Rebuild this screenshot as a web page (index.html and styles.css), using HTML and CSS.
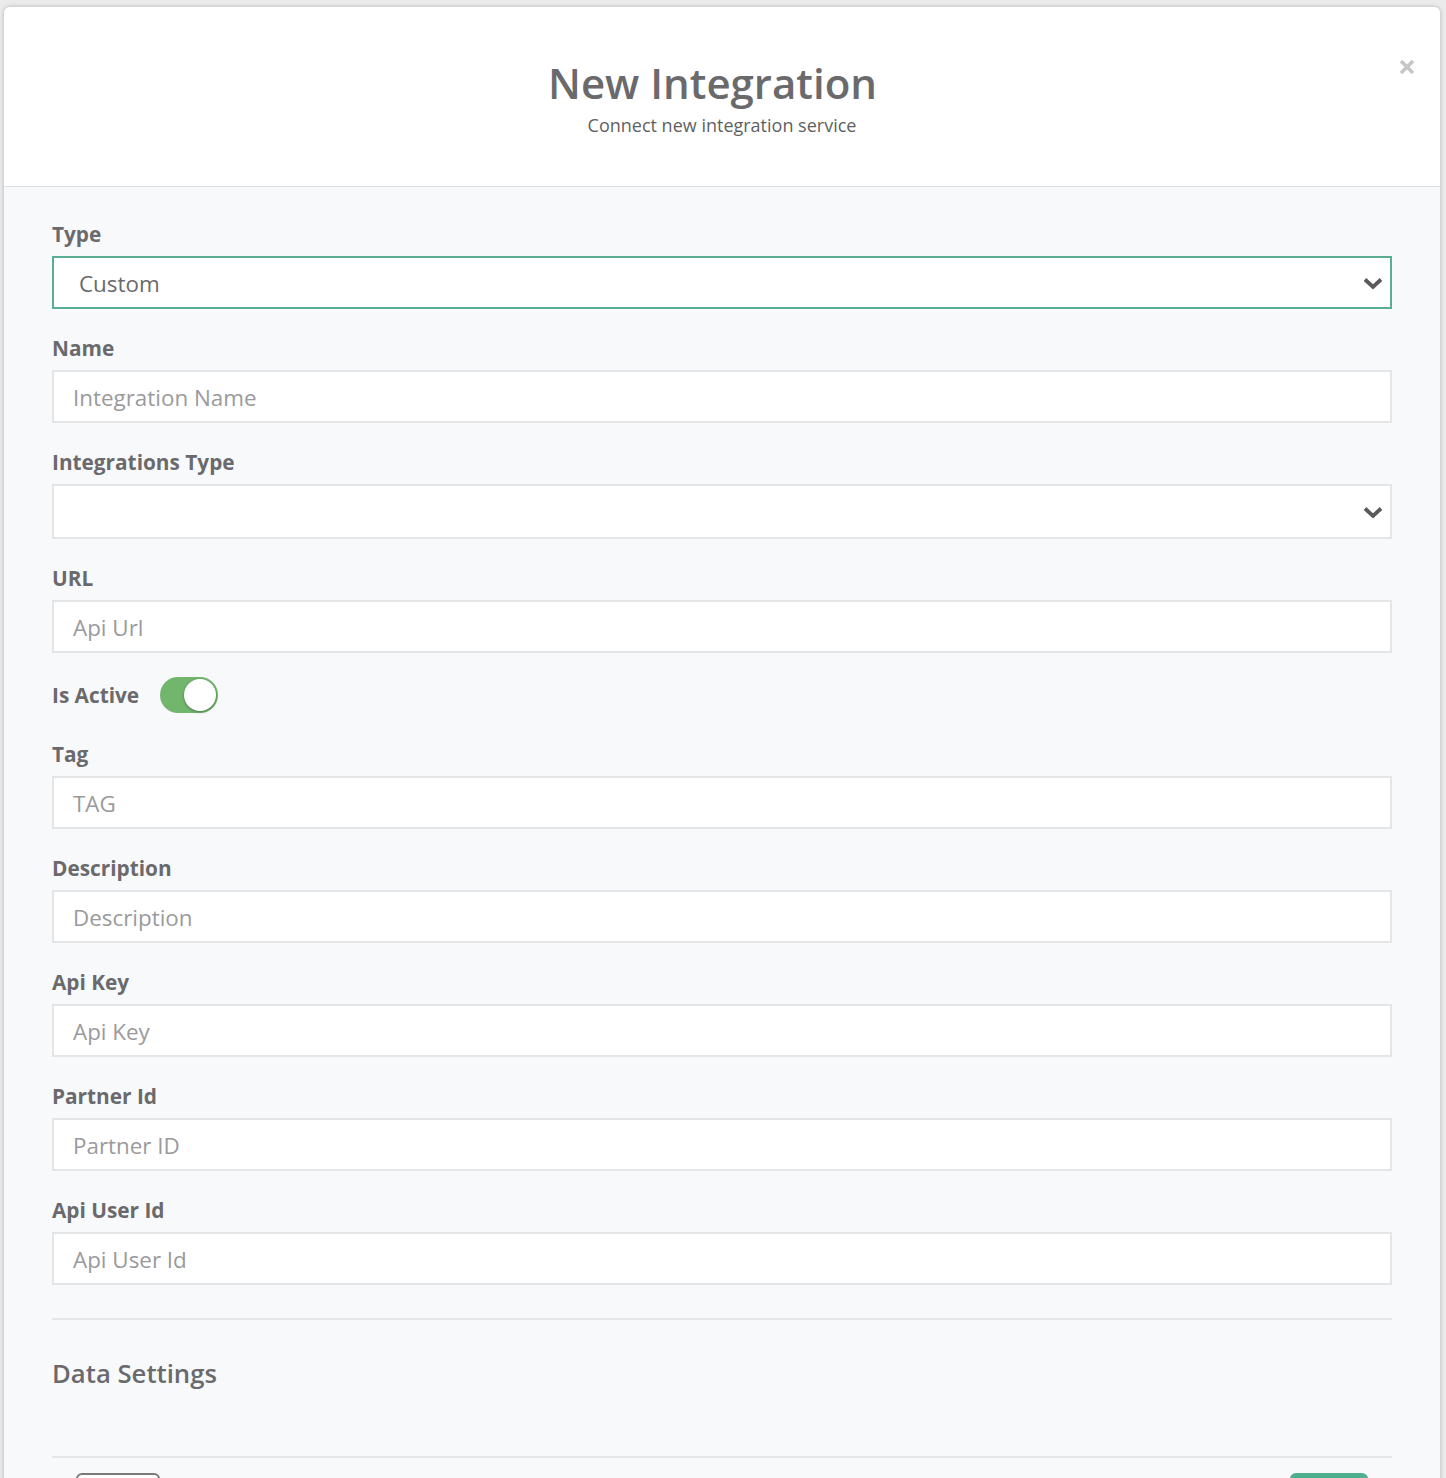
FILE: index.html
```html
<!DOCTYPE html>
<html>
<head>
<meta charset="utf-8">
<link rel="stylesheet" href="styles.css">
</head>
<body>
<div class="modal">
  <div class="modal-header">
    <h1 class="title">New Integration</h1>
    <p class="subtitle">Connect new integration service</p>
    <button class="close" aria-label="Close">
      <svg width="16" height="16" viewBox="0 0 16 16"><path d="M2 2L14 14M14 2L2 14" stroke="#c6c6c6" stroke-width="3.6" stroke-linecap="butt"/></svg>
    </button>
  </div>
  <div class="modal-body">
    <div class="field">
      <label class="label">Type</label>
      <div class="select focused"><span class="select-value">Custom</span>
        <svg class="chev" width="20" height="13" viewBox="0 0 20 13"><path d="M2 2.5L10 10L18 2.5" fill="none" stroke="#5a5a5c" stroke-width="3.8"/></svg>
      </div>
    </div>
    <div class="field">
      <label class="label">Name</label>
      <div class="input"><span class="ph">Integration Name</span></div>
    </div>
    <div class="field">
      <label class="label">Integrations Type</label>
      <div class="select tall"><span class="select-value"></span>
        <svg class="chev" width="20" height="13" viewBox="0 0 20 13"><path d="M2 2.5L10 10L18 2.5" fill="none" stroke="#5a5a5c" stroke-width="3.8"/></svg>
      </div>
    </div>
    <div class="field">
      <label class="label">URL</label>
      <div class="input"><span class="ph">Api Url</span></div>
    </div>
    <div class="toggle-row">
      <span class="label">Is Active</span>
      <span class="toggle"><span class="knob"></span></span>
    </div>
    <div class="field">
      <label class="label">Tag</label>
      <div class="input"><span class="ph">TAG</span></div>
    </div>
    <div class="field">
      <label class="label">Description</label>
      <div class="input"><span class="ph">Description</span></div>
    </div>
    <div class="field">
      <label class="label">Api Key</label>
      <div class="input"><span class="ph">Api Key</span></div>
    </div>
    <div class="field">
      <label class="label">Partner Id</label>
      <div class="input"><span class="ph">Partner ID</span></div>
    </div>
    <div class="field last">
      <label class="label">Api User Id</label>
      <div class="input"><span class="ph">Api User Id</span></div>
    </div>
    <hr class="sep">
    <h2 class="section">Data Settings</h2>
    <hr class="sep">
    <div class="footer">
      <button class="btn btn-outline" aria-label="Cancel"></button>
      <button class="btn btn-primary" aria-label="Save"></button>
    </div>
  </div>
</div>
</body>
</html>
```
FILE: styles.css
```css
* { box-sizing: border-box; }
html, body { margin: 0; padding: 0; }
body {
  background: #ebebeb;
  font-family: "Open Sans", "Noto Sans", sans-serif;
  color: #6a6a6d;
  height: 1478px;
  overflow: hidden;
  padding: 7px 6px 0 4px;
}
.modal {
  background: #f8f9fb;
  border-radius: 6px 6px 0 0;
  box-shadow: 0 0 4px rgba(0,0,0,0.25);
  overflow: hidden;
}
.modal-header {
  position: relative;
  background: #fff;
  height: 180px;
  border-bottom: 1px solid #dfe0e3;
  padding-top: 50px;
  text-align: center;
}
.title {
  margin: 0;
  padding-right: 19px;
  font-size: 42px;
  line-height: 52px;
  font-weight: 600;
  color: #6a6a6d;
}
.subtitle {
  margin: 4px 0 0;
  font-size: 18px;
  line-height: 24px;
  color: #5f5f62;
}
.close {
  position: absolute;
  right: 25px;
  top: 52px;
  background: none;
  border: 0;
  padding: 0;
  width: 16px;
  height: 16px;
  cursor: pointer;
}
.close svg { display: block; }
.modal-body {
  padding: 35px 48px 0 48px;
}
.field {
  display: flex;
  flex-direction: column;
  margin-bottom: 27px;
}
.field.last { margin-bottom: 33px; }
.label {
  display: block;
  font-size: 20.8px;
  line-height: 24px;
  font-weight: 700;
  color: #6a6a6d;
  margin-bottom: 10px;
}
.input, .select {
  height: 53px;
  background: #fff;
  border: 2px solid #e4e5e7;
  display: flex;
  align-items: center;
  padding-left: 19px;
  padding-top: 1px;
  font-size: 22.4px;
}
.ph { color: #9a9a9d; }
.select {
  justify-content: space-between;
  padding-right: 7px;
}
.select.tall { height: 55px; }
.select.focused {
  border-color: #5aae94;
  padding-left: 25px;
}
.select-value { color: #6a6a6d; }
.chev { display: block; }
.toggle-row {
  display: flex;
  align-items: center;
  height: 36px;
  margin-top: -3px;
  margin-bottom: 29px;
}
.toggle-row .label { margin: 0 21px 0 0; }
.toggle {
  position: relative;
  width: 58px;
  height: 36px;
  border-radius: 18px;
  background: #72b66e;
}
.knob {
  position: absolute;
  right: 2px;
  top: 2px;
  width: 32px;
  height: 32px;
  border-radius: 50%;
  background: #fff;
  box-shadow: 0 1px 3px rgba(0,0,0,0.35);
}
.sep {
  border: 0;
  border-top: 2px solid #e5e6e8;
  margin: 0;
}
.section {
  margin: 38px 0 66px;
  font-size: 25.7px;
  line-height: 32px;
  font-weight: 600;
  color: #6a6a6d;
}
.footer {
  display: flex;
  justify-content: space-between;
  align-items: flex-start;
  padding: 15px 24px 0;
}
.btn {
  height: 44px;
  border-radius: 6px;
  padding: 0;
}
.btn-outline {
  width: 84px;
  background: #fff;
  border: 2px solid #7a7a7c;
}
.btn-primary {
  width: 78px;
  background: #4fae8e;
  border: 0;
}
```
